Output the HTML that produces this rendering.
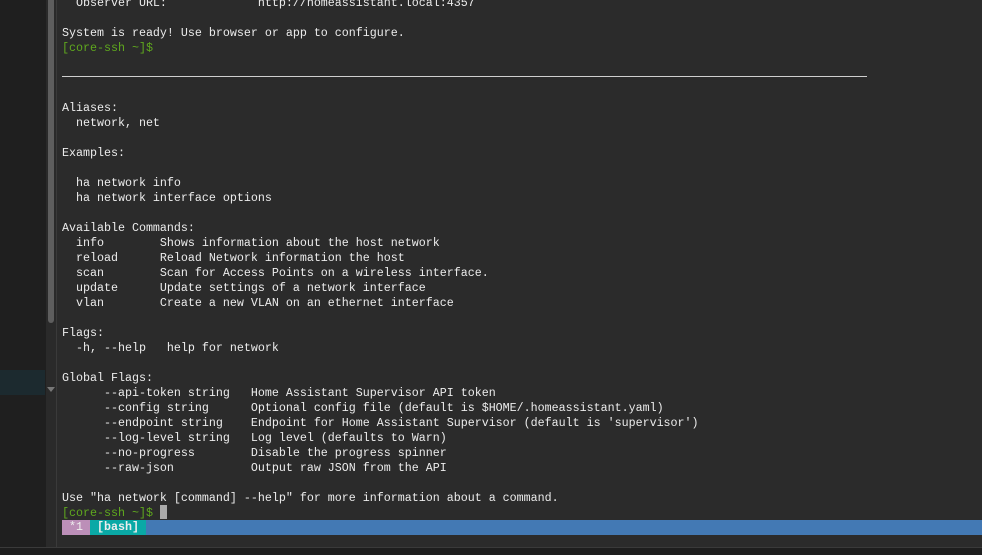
<!DOCTYPE html><html><head><style>
body{margin:0;width:982px;height:554px;background:#2b2b2b;overflow:hidden;position:relative;font-family:"Liberation Mono",monospace}
.left{position:absolute;left:0;top:0;width:46px;height:547px;background:#1f1f1f}
.hl{position:absolute;left:0;top:370px;width:45px;height:25px;background:#1c2a2f}
.sb{position:absolute;left:46px;top:0;width:10px;height:547px;background:#2a2a2a}
.thumb{position:absolute;left:48px;top:0;width:6px;height:323px;background:#5e5e5e;border-radius:0 0 3px 3px}
.arr{position:absolute;left:47px;top:387px;width:0;height:0;border-left:4px solid transparent;border-right:4px solid transparent;border-top:5px solid #777}
.div{position:absolute;left:56px;top:0;width:1px;height:547px;background:#3a3a3a}
pre{position:absolute;left:62px;top:-4px;margin:0;font-size:11.67px;line-height:15px;color:#ececec;font-family:"Liberation Mono",monospace}
.g{color:#5fa81e}
.hr{position:absolute;left:62px;top:76px;width:805px;height:1px;background:#cfcfcf}
.status{position:absolute;left:62px;top:520px;width:920px;height:15px;background:#4379b4}
.s1{position:absolute;left:62px;top:520px;width:28px;height:15px;background:#bc8fb8;color:#eee;font-size:11.67px;line-height:15px;text-align:center}
.s2{position:absolute;left:90px;top:520px;width:56px;height:15px;background:#0aa9a6;color:#eee;font-size:11.67px;line-height:15px;font-weight:bold;text-align:center}
.cur{position:absolute;left:160px;top:505px;width:7px;height:14px;background:#aaa}
.bot{position:absolute;left:0;top:547px;width:982px;height:7px;background:#1e1e1e;border-top:1px solid #3a3a3a}
</style></head><body>
<div class="left"></div><div class="hl"></div><div class="sb"></div><div class="thumb"></div><div class="arr"></div><div class="div"></div>
<pre>  Observer URL:             http://homeassistant.local:4357

System is ready! Use browser or app to configure.
<span class="g">[core-ssh ~]$</span>



Aliases:
  network, net

Examples:

  ha network info
  ha network interface options

Available Commands:
  info        Shows information about the host network
  reload      Reload Network information the host
  scan        Scan for Access Points on a wireless interface.
  update      Update settings of a network interface
  vlan        Create a new VLAN on an ethernet interface

Flags:
  -h, --help   help for network

Global Flags:
      --api-token string   Home Assistant Supervisor API token
      --config string      Optional config file (default is $HOME/.homeassistant.yaml)
      --endpoint string    Endpoint for Home Assistant Supervisor (default is 'supervisor')
      --log-level string   Log level (defaults to Warn)
      --no-progress        Disable the progress spinner
      --raw-json           Output raw JSON from the API

Use "ha network [command] --help" for more information about a command.
<span class="g">[core-ssh ~]$</span></pre>
<div class="hr"></div><div class="cur"></div>
<div class="status"></div><div class="s1">*1</div><div class="s2">[bash]</div>
<div class="bot"></div>
</body></html>
